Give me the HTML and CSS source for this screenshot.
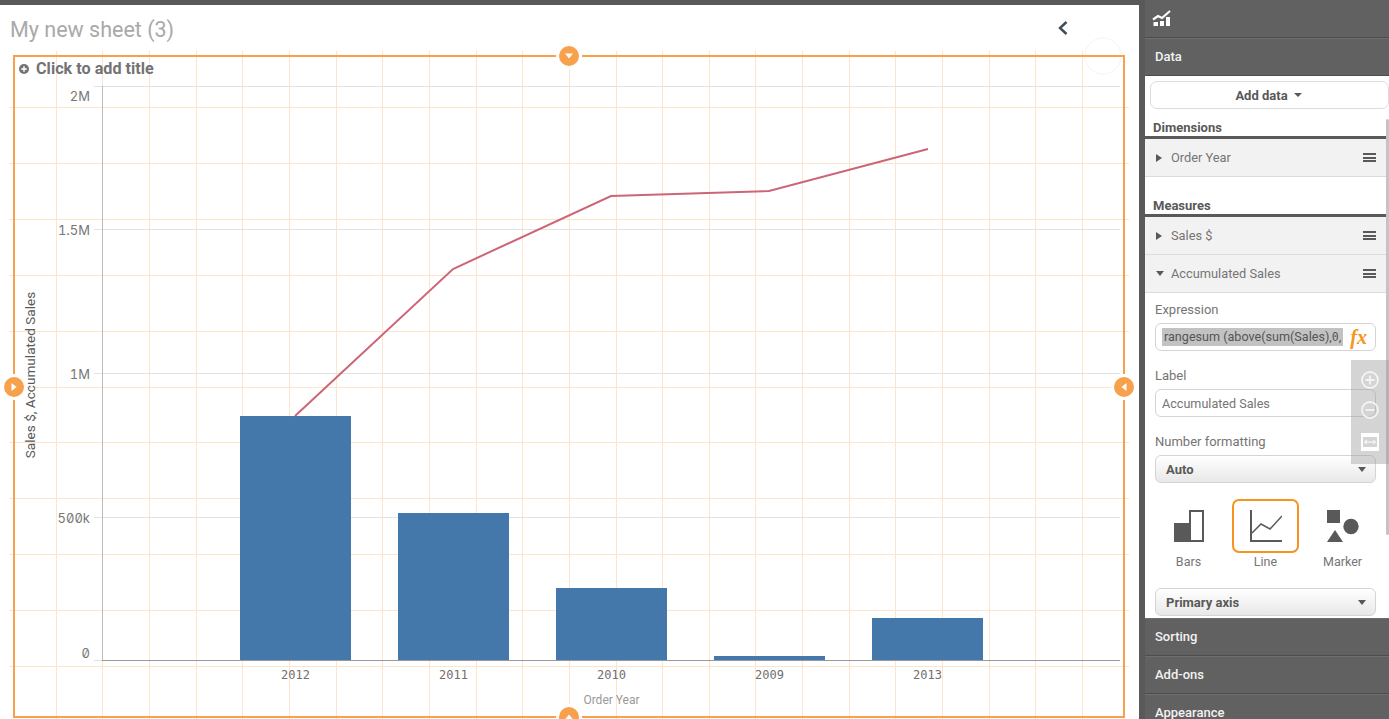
FILE: index.html
```html
<!DOCTYPE html>
<html lang="en">
<head>
<meta charset="utf-8">
<title>My new sheet (3)</title>
<link rel="stylesheet" href="styles.css">
</head>
<body>
<div class="app">
  <main class="main">
    <div class="topbar"></div>
    <header class="sheet-header">
      <h1 class="sheet-title">My new sheet (3)</h1>
      <svg class="back" width="12" height="16" viewBox="0 0 12 16"><path d="M9.500 2 L3 8 L9.500 14" fill="none" stroke="#404a55" stroke-width="2.400"/></svg>
    </header>
    <div class="canvas">
      <svg class="chart" width="1139" height="668" viewBox="0 51 1139 668">
        <circle class="ghost" cx="1103" cy="56" r="18"/>
        <path class="snap" shape-rendering="crispEdges" d="M56.500 51V719M102.500 51V719M149.500 51V719M196.500 51V719M242.500 51V719M289.500 51V719M336.500 51V719M382.500 51V719M429.500 51V719M476.500 51V719M522.500 51V719M569.500 51V719M616.500 51V719M662.500 51V719M709.500 51V719M755.500 51V719M802.500 51V719M849.500 51V719M895.500 51V719M942.500 51V719M989.500 51V719M1035.500 51V719M1082.500 51V719M9 107.500H1129M9 163.500H1129M9 219.500H1129M9 275.500H1129M9 331.500H1129M9 387.500H1129M9 442.500H1129M9 498.500H1129M9 554.500H1129M9 610.500H1129M9 666.500H1129"/>
        <path class="grid" shape-rendering="crispEdges" d="M94 86.500H1120M94 229.500H1120M94 373.500H1120M94 517.500H1120M94 660.500H102"/>
        <path class="axis-y" shape-rendering="crispEdges" d="M102.500 86V660"/>
        <g class="bars">
          <rect x="240" y="416" width="111" height="245"/>
          <rect x="398" y="513" width="111" height="148"/>
          <rect x="556" y="588" width="111" height="73"/>
          <rect x="714" y="656" width="111" height="5"/>
          <rect x="872" y="618" width="111" height="43"/>
        </g>
        <path class="axis-x" shape-rendering="crispEdges" d="M102 660.500H1120"/>
        <polyline class="series" points="295,416 453,269 611,196 769,191 928,149"/>
        <g class="tick-y">
          <text x="90" y="101">2M</text>
          <text x="90" y="235">1.5M</text>
          <text x="90" y="379">1M</text>
          <text x="90" y="523">500k</text>
          <text x="90" y="658">0</text>
        </g>
        <g class="tick-x">
          <text x="295.500" y="679">2012</text>
          <text x="453.500" y="679">2011</text>
          <text x="611.500" y="679">2010</text>
          <text x="769.500" y="679">2009</text>
          <text x="927.500" y="679">2013</text>
        </g>
        <text class="title-x" x="611.500" y="704">Order Year</text>
        <text class="title-y" transform="translate(35 375) rotate(-90)">Sales $, Accumulated Sales</text>
        <rect class="frame" x="14" y="56" width="1110" height="661"/>
        <circle class="plus" cx="24" cy="69" r="5"/>
        <path class="plus-bar" d="M21.200 69H26.800M24 66.200V71.800"/>
        <text class="add-title" x="36" y="74">Click to add title</text>
      </svg>
      <span class="handle handle-top"><svg width="10" height="8" viewBox="0 0 10 8"><path d="M1 1.500H9L5 6.500Z" fill="#fff"/></svg></span>
      <span class="handle handle-bottom"><svg width="10" height="8" viewBox="0 0 10 8"><path d="M1 6.500H9L5 1.500Z" fill="#fff"/></svg></span>
      <span class="handle handle-left"><svg width="8" height="10" viewBox="0 0 8 10"><path d="M1.500 1V9L6.500 5Z" fill="#fff"/></svg></span>
      <span class="handle handle-right"><svg width="8" height="10" viewBox="0 0 8 10"><path d="M6.500 1V9L1.500 5Z" fill="#fff"/></svg></span>
    </div>
  </main>

  <aside class="panel">
    <div class="panel-top">
      <svg width="19" height="17" viewBox="0 0 19 17"><path d="M1 9.500 L6 6 L10 8 L18 1" fill="none" stroke="#fff" stroke-width="2.200"/><path d="M1.500 16V12H6V16ZM8 16V11H12V16ZM14 16V7H18V16Z" fill="#fff"/></svg>
    </div>
    <div class="accordion">Data</div>
    <div class="scroll">
      <div class="add-wrap"><button class="add-btn">Add data <i class="caret"></i></button></div>
      <div class="section-head">Dimensions</div>
      <div class="item"><i class="tri-right"></i><span>Order Year</span><i class="burger"></i></div>
      <div class="section-head measures">Measures</div>
      <div class="item"><i class="tri-right"></i><span>Sales $</span><i class="burger"></i></div>
      <div class="item"><i class="tri-down"></i><span>Accumulated Sales</span><i class="burger"></i></div>
      <div class="form">
        <label class="field-label">Expression</label>
        <div class="input expr"><span class="selected">rangesum (above(sum(Sales),<span class="mono">0</span>,</span><em class="fx">fx</em></div>
        <label class="field-label">Label</label>
        <div class="input">Accumulated Sales</div>
        <label class="field-label">Number formatting</label>
        <div class="select">Auto<i class="caret-lg"></i></div>
        <div class="types">
          <div class="type">
            <span class="type-icon">
              <svg width="30" height="32" viewBox="0 0 30 32"><path d="M0 13H16V32H0Z" fill="#595959"/><rect x="16" y="1" width="13" height="30" fill="#fff" stroke="#595959" stroke-width="2"/></svg>
            </span>
            <span class="type-name">Bars</span>
          </div>
          <div class="type active">
            <span class="type-icon">
              <svg width="32" height="32" viewBox="0 0 32 32"><path d="M1 0V31H32" fill="none" stroke="#595959" stroke-width="2"/><path d="M2 23L11 14L20 19L32 6" fill="none" stroke="#595959" stroke-width="1.500"/></svg>
            </span>
            <span class="type-name">Line</span>
          </div>
          <div class="type">
            <span class="type-icon">
              <svg width="32" height="32" viewBox="0 0 32 32"><rect x="0" y="0" width="13" height="13" fill="#595959"/><circle cx="24" cy="16.500" r="7.700" fill="#595959"/><path d="M0 32L8 20L16 32Z" fill="#595959"/></svg>
            </span>
            <span class="type-name">Marker</span>
          </div>
        </div>
        <div class="select">Primary axis<i class="caret-lg"></i></div>
      </div>
      <i class="scrollbar"></i>
    </div>
    <div class="accordion">Sorting</div>
    <div class="accordion">Add-ons</div>
    <div class="accordion">Appearance</div>
    <div class="zoom-tools">
      <svg width="20" height="20" viewBox="0 0 20 20"><circle cx="10" cy="10" r="8" fill="none" stroke="#f4f4f4" stroke-width="1.800"/><path d="M5.500 10H14.500M10 5.500V14.500" stroke="#f4f4f4" stroke-width="1.800"/></svg>
      <svg width="20" height="20" viewBox="0 0 20 20"><circle cx="10" cy="10" r="8" fill="none" stroke="#f4f4f4" stroke-width="1.800"/><path d="M5.500 10H14.500" stroke="#f4f4f4" stroke-width="1.800"/></svg>
      <svg class="tool-expand" width="18" height="18" viewBox="0 0 18 18"><rect x="1" y="1" width="16" height="16" fill="none" stroke="#fff" stroke-width="2"/><path d="M0 0H18V4H0ZM0 14H18V18H0Z" fill="#fff"/><path d="M3.500 9H14.500M3.500 9L6 7M3.500 9L6 11M14.500 9L12 7M14.500 9L12 11" fill="none" stroke="#fff" stroke-width="1"/></svg>
    </div>
  </aside>
</div>
</body>
</html>
```

FILE: styles.css
```css
* { box-sizing: border-box; }
html, body { margin: 0; height: 100%; overflow: hidden; }
body { font-family: Roboto, "Open Sans", sans-serif; background: #fff; }

.app { display: flex; width: 1389px; height: 719px; }

/* sheet area */
.main { width: 1139px; flex: none; display: flex; flex-direction: column; }
.topbar { height: 5px; background: #595959; }
.sheet-header { height: 46px; display: flex; align-items: center; justify-content: space-between; padding: 2px 70px 0 10px; }
.sheet-title { margin: 0; font-size: 21.500px; font-weight: 400; color: #a9a9a9; }
.back { margin-bottom: 2px; }

.canvas { position: relative; width: 1139px; height: 668px; }
.chart { display: block; overflow: visible; }
.snap { stroke: #fde4cc; stroke-width: 1; fill: none; }
.grid { stroke: #e2e2e2; stroke-width: 1; fill: none; }
.axis-y { stroke: #bdbdbd; stroke-width: 1; fill: none; }
.axis-x { stroke: #999; stroke-width: 1; fill: none; }
.bars rect { fill: #4477aa; }
.series { fill: none; stroke: #cc6677; stroke-width: 2; }
.tick-y text { font-family: Inter, Roboto, sans-serif; font-feature-settings: "zero", "tnum"; font-size: 13px; fill: #777; text-anchor: end; }
.tick-x text { font-family: "DejaVu Sans Mono", monospace; font-size: 12px; fill: #707070; text-anchor: middle; }
.title-x { font-size: 12px; fill: #999; text-anchor: middle; }
.title-y { font-size: 13.600px; fill: #595959; text-anchor: middle; }
.frame { fill: none; stroke: #f8a14c; stroke-width: 2; }
.ghost { fill: none; stroke: #f4f4f4; stroke-width: 1; }
.plus { fill: #737373; }
.plus-bar { stroke: #fff; stroke-width: 1.500; fill: none; }
.add-title { font-size: 16.200px; font-weight: 700; fill: #737373; }

.handle { position: absolute; width: 20px; height: 20px; border-radius: 50%; background: #f8a14c; box-shadow: 0 0 0 3px #fff; display: flex; align-items: center; justify-content: center; }
.handle-top { left: 559px; top: -5px; }
.handle-bottom { left: 559px; top: 656px; }
.handle-left { left: 4px; top: 326px; }
.handle-right { left: 1114px; top: 326px; }

/* property panel */
.panel { position: relative; width: 250px; flex: none; display: flex; flex-direction: column; border-left: 6px solid #595959; height: 719px; overflow: hidden; background: #fff; }
.panel-top { height: 38px; flex: none; background: #616161; border-bottom: 1px solid #4d4d4d; display: flex; align-items: center; padding: 0 0 1px 7px; }
.accordion { height: 38px; flex: none; background: #616161; color: #f2f2f2; font-size: 13px; font-weight: 500; display: flex; align-items: center; padding: 0 0 2px 10px; border-bottom: 1px solid #4d4d4d; border-top: 1px solid #6e6e6e; }
.scroll { position: relative; height: 542px; flex: none; overflow: hidden; }
.add-wrap { padding: 5px 0 0 5px; height: 43px; }
.add-btn { width: 239px; height: 28px; background: #fff; border: 1px solid #dcdcdc; border-radius: 7px; font: 700 13px Roboto, sans-serif; color: #595959; display: flex; align-items: center; justify-content: center; gap: 6px; padding: 0 2px 0 0; }
.caret { width: 0; height: 0; border: 4px solid transparent; border-top-color: #595959; border-bottom: 0; }
.section-head { height: 20px; padding: 2px 0 0 8px; font-size: 13px; font-weight: 700; color: #595959; border-bottom: 3px solid #595959; line-height: 13px; }
.measures { margin-top: 20px; }
.item { height: 38px; background: #f2f2f2; border-bottom: 1px solid #dcdcdc; display: flex; align-items: center; padding: 0 13px 0 11px; font-size: 12.800px; color: #757575; }
.item span { flex: 1; margin-left: 9px; }
.tri-right { width: 0; height: 0; border: 4px solid transparent; border-left: 6px solid #595959; border-right: 0; }
.tri-down { width: 0; height: 0; border: 4px solid transparent; border-top: 5px solid #595959; border-bottom: 0; margin-right: -2px; }
.burger { width: 13px; height: 9px; border-top: 2px solid #595959; border-bottom: 2px solid #595959; position: relative; }
.burger::after { content: ""; position: absolute; left: 0; right: 0; top: 1.500px; height: 2px; background: #595959; }

.form { padding: 9px 13px 0 10px; display: flex; flex-direction: column; }
.field-label { font-size: 13px; color: #757575; height: 15px; line-height: 15px; margin-bottom: 6px; }
.input { height: 28px; border: 1px solid #d4d4d4; border-radius: 6px; margin-bottom: 17px; font-size: 12.600px; color: #757575; display: flex; align-items: center; padding-left: 6px; white-space: nowrap; overflow: hidden; }
.expr { position: relative; }
.selected { background: #c2c2c2; color: #555; line-height: 17px; padding: 0 2px; }
.mono { font-family: "DejaVu Sans Mono", monospace; font-size: 11.500px; }
.fx { position: absolute; right: 8px; top: 3px; font-family: "Liberation Serif", serif; font-size: 20px; font-weight: 700; font-style: italic; color: #f7931e; line-height: 20px; }
.select { height: 28px; flex: none; border: 1px solid #d4d4d4; border-radius: 6px; background: linear-gradient(#fff, #e8e8e8); font-size: 13px; font-weight: 700; color: #595959; display: flex; align-items: center; justify-content: space-between; padding: 0 9px 0 10px; }
.caret-lg { width: 0; height: 0; border: 4.500px solid transparent; border-top: 5px solid #595959; border-bottom: 0; }
.types { display: flex; justify-content: space-between; padding-top: 16px; height: 105px; flex: none; }
.type { width: 67px; display: flex; flex-direction: column; align-items: center; }
.type-icon { width: 67px; height: 54px; display: flex; align-items: center; justify-content: center; border: 2px solid transparent; border-radius: 7px; }
.type.active .type-icon { border-color: #f7931e; }
.type-name { font-size: 12.500px; color: #757575; margin-top: 1px; line-height: 16px; }
.scrollbar { position: absolute; right: 0; top: 43px; width: 3px; height: 416px; background: #c4c4c4; border-radius: 2px; }

.zoom-tools { position: absolute; right: 0; top: 360px; width: 38px; height: 104px; background: rgba(160,160,160,.45); display: flex; flex-direction: column; align-items: center; gap: 10px; padding-top: 10px; }
.tool-expand { margin-top: 3px; }
```
